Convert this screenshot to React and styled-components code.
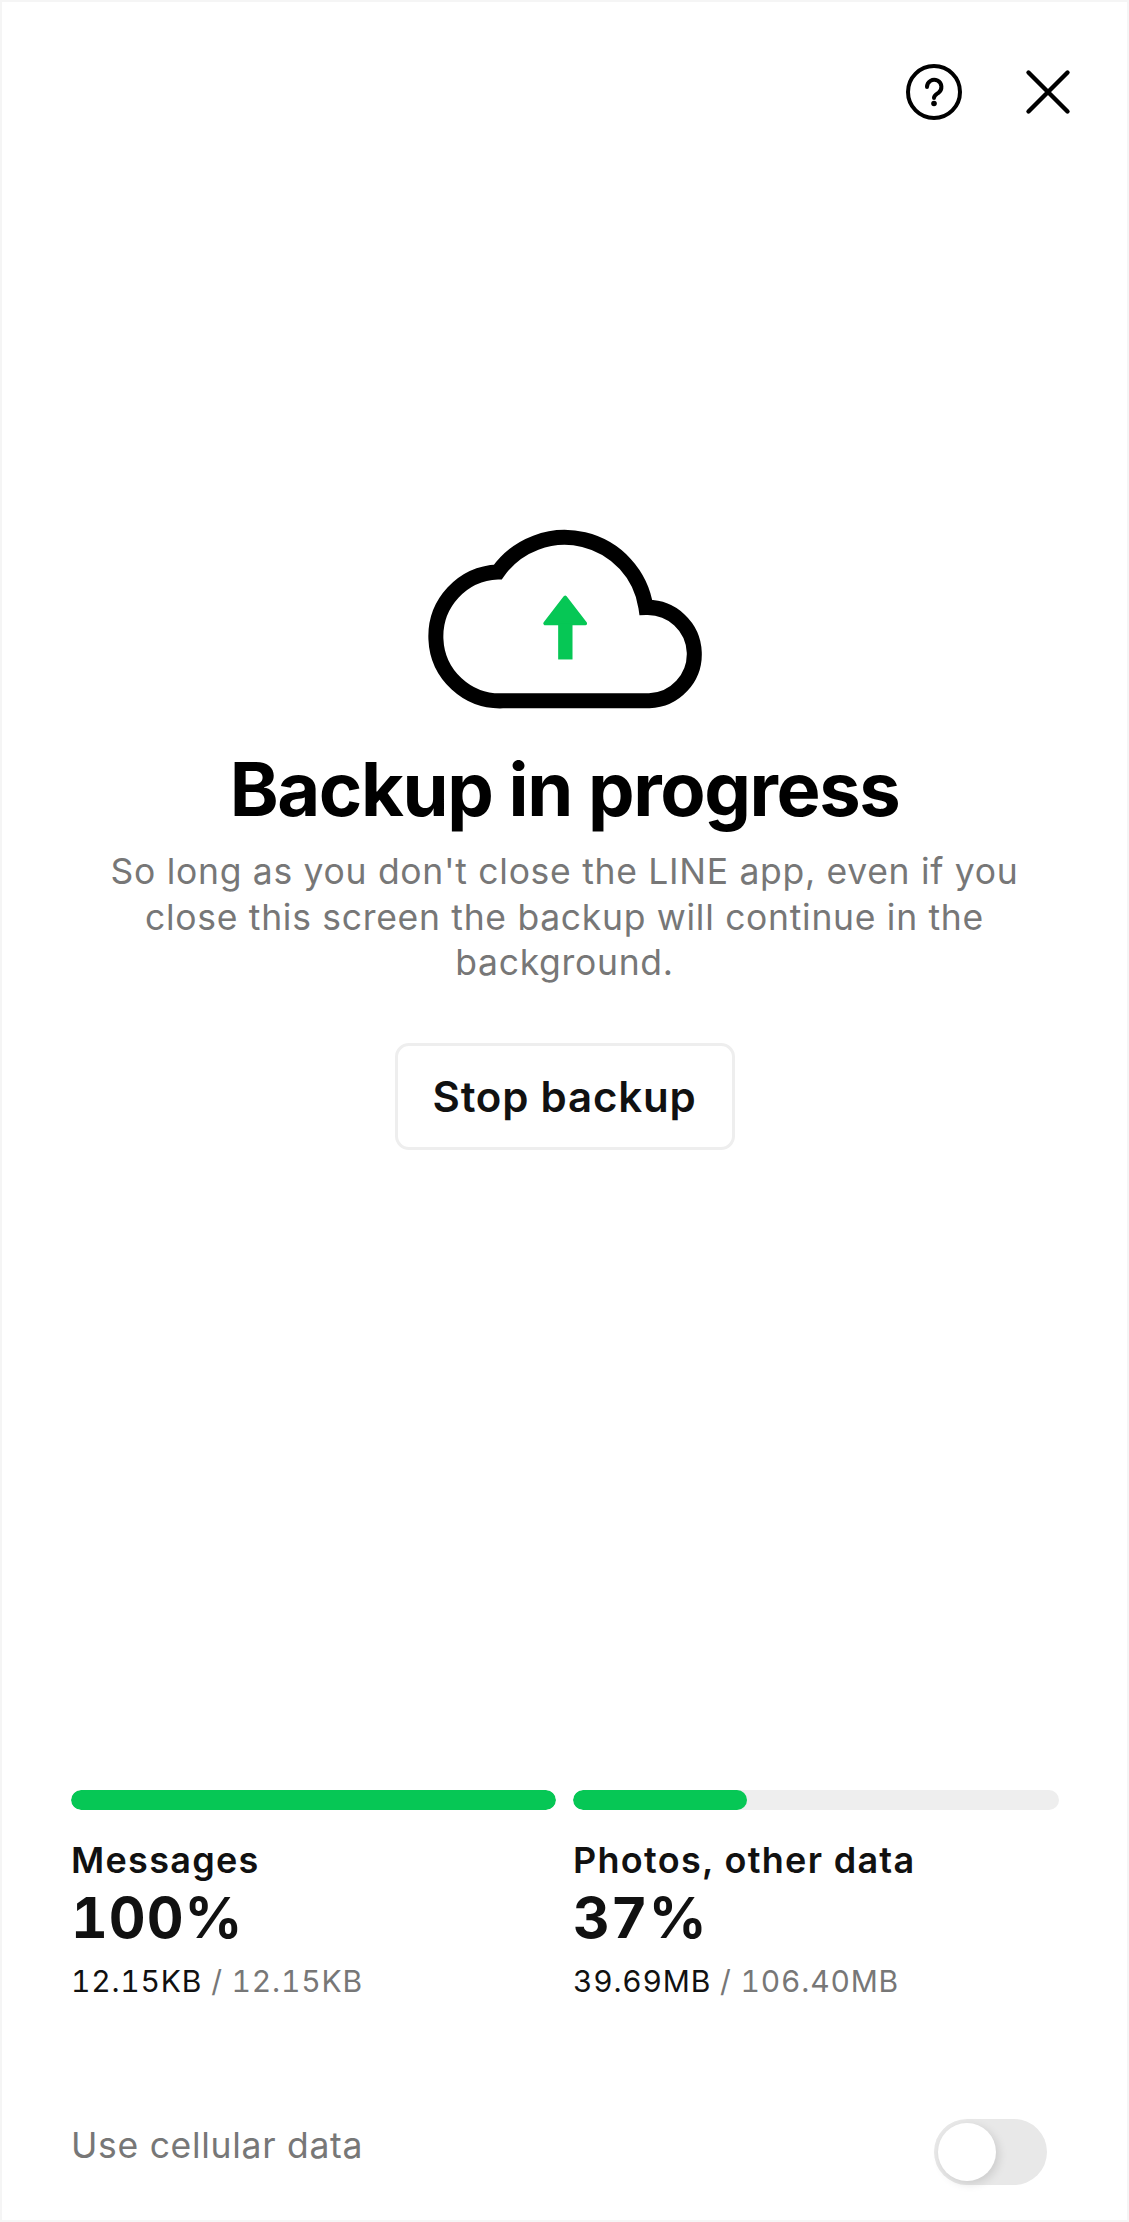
import React from 'react';
import styled, { createGlobalStyle } from 'styled-components';

const GREEN = '#06c755';

const GlobalStyle = createGlobalStyle`
  html, body { margin: 0; padding: 0; background: #fff; }
  * { box-sizing: border-box; }
`;

const progressItems = [
  { title: 'Messages', percent: 100, bar: 100, done: '12.15KB', total: '12.15KB' },
  { title: 'Photos, other data', percent: 37, bar: 35.7, done: '39.69MB', total: '106.40MB' },
];

const HelpIcon = () => (
  <svg width="60" height="60" viewBox="0 0 60 60" fill="none" stroke="#000" strokeLinecap="round">
    <circle cx="30" cy="30" r="26" strokeWidth="4" />
    <path d="M23 25a7.2 7.2 0 1 1 11.4 5.8C32 32.500 30 33.500 30 36" strokeWidth="4" />
    <circle cx="30" cy="41.500" r="2.800" fill="#000" stroke="none" />
  </svg>
);

const CloseIcon = () => (
  <svg width="60" height="60" viewBox="0 0 60 60" fill="none" stroke="#000" strokeWidth="4.400" strokeLinecap="round">
    <path d="M10.500 10.500 49.500 49.500M49.500 10.500 10.500 49.500" />
  </svg>
);

const CloudIcon = () => (
  <svg width="272" height="178.500" viewBox="85 60 815 535" fill="none" overflow="visible">
    <path
      d="M306 572A193 193 0 0 1 291 186A246 246 0 0 1 735 292A140 140 0 0 1 745 572Z"
      stroke="#000"
      strokeWidth="45"
    />
    <path d="M493 262 433 340H553Z" fill={GREEN} stroke={GREEN} strokeWidth="11" strokeLinejoin="round" />
    <rect x="472" y="340" width="43" height="108" fill={GREEN} />
  </svg>
);

export default function App() {
  return (
    <>
      <GlobalStyle />
      <Screen>
        <TopBar>
          <IconButton aria-label="Help"><HelpIcon /></IconButton>
          <IconButton aria-label="Close"><CloseIcon /></IconButton>
        </TopBar>

        <Hero>
          <CloudIcon />
          <Title>Backup in progress</Title>
          <Description>
            So long as you don't close the LINE app, even if you close this screen the backup will continue in the background.
          </Description>
          <StopButton>Stop backup</StopButton>
        </Hero>

        <Progress>
          {progressItems.map(item => (
            <ProgressColumn key={item.title}>
              <Track>
                <Fill style={{ width: `${item.bar}%` }} />
              </Track>
              <ItemTitle>{item.title}</ItemTitle>
              <Percent>{item.percent}%</Percent>
              <Sizes>{item.done} <Muted>/ {item.total}</Muted></Sizes>
            </ProgressColumn>
          ))}
        </Progress>

        <CellularRow>
          <CellularLabel>Use cellular data</CellularLabel>
          <Toggle><Knob /></Toggle>
        </CellularRow>
      </Screen>
    </>
  );
}

const Screen = styled.div`
  width: 1129px;
  height: 2222px;
  display: flex;
  flex-direction: column;
  border: 2px solid #f5f5f5;
  background: #fff;
  font-family: Inter, 'Liberation Sans', sans-serif;
  color: #111;
  overflow: hidden;
`;

const TopBar = styled.div`
  display: flex;
  justify-content: flex-end;
  gap: 54px;
  padding: 60px 49px 0 0;
`;

const IconButton = styled.button`
  width: 60px;
  height: 60px;
  padding: 0;
  border: none;
  background: none;
  display: block;
`;

const Hero = styled.div`
  display: flex;
  flex-direction: column;
  align-items: center;
  padding: 408px 90px 0;
`;

const Title = styled.h1`
  margin: 35px 0 0;
  font-size: 74px;
  line-height: 90px;
  font-weight: 700;
  letter-spacing: -1.4px;
  color: #000;
`;

const Description = styled.p`
  margin: 15.500px 0 0;
  width: 925px;
  font-size: 35.500px;
  line-height: 45.500px;
  letter-spacing: 0.7px;
  text-align: center;
  color: #777;
`;

const StopButton = styled.button`
  margin-top: 57px;
  width: 340px;
  height: 107px;
  border: 3px solid #eee;
  border-radius: 14px;
  background: #fff;
  font-family: inherit;
  font-size: 42px;
  font-weight: 600;
  letter-spacing: 0.8px;
  color: #111;
`;

const Progress = styled.div`
  display: grid;
  grid-template-columns: 485px 486px;
  gap: 17px;
  margin-top: auto;
  padding-left: 69px;
`;

const ProgressColumn = styled.div`
  display: flex;
  flex-direction: column;
`;

const Track = styled.div`
  height: 20px;
  border-radius: 10px;
  background: #eee;
  overflow: hidden;
`;

const Fill = styled.div`
  height: 100%;
  border-radius: 10px;
  background: ${GREEN};
`;

const ItemTitle = styled.div`
  margin-top: 28px;
  font-size: 36px;
  line-height: 44px;
  font-weight: 600;
  letter-spacing: 1.3px;
`;

const Percent = styled.div`
  margin-top: 3px;
  font-size: 57px;
  line-height: 66px;
  font-weight: 700;
  font-feature-settings: 'tnum';
  letter-spacing: 1px;
`;

const Sizes = styled.div`
  margin-top: 11px;
  font-size: 30px;
  line-height: 38px;
  font-feature-settings: 'tnum';
  letter-spacing: 0.8px;
  color: #111;
`;

const Muted = styled.span`
  color: #777;
`;

const CellularRow = styled.div`
  display: flex;
  align-items: center;
  justify-content: space-between;
  margin-top: 119px;
  padding: 0 80px 35px 69px;
`;

const CellularLabel = styled.div`
  padding-bottom: 14px;
  font-size: 35.500px;
  letter-spacing: 0.7px;
  color: #777;
`;

const Toggle = styled.div`
  position: relative;
  width: 113px;
  height: 66px;
  border-radius: 33px;
  background: #e8e8e8;
`;

const Knob = styled.div`
  position: absolute;
  left: 4px;
  top: 4px;
  width: 58px;
  height: 58px;
  border-radius: 50%;
  background: #fff;
  box-shadow: 3px 3px 10px rgba(0, 0, 0, 0.12);
`;
